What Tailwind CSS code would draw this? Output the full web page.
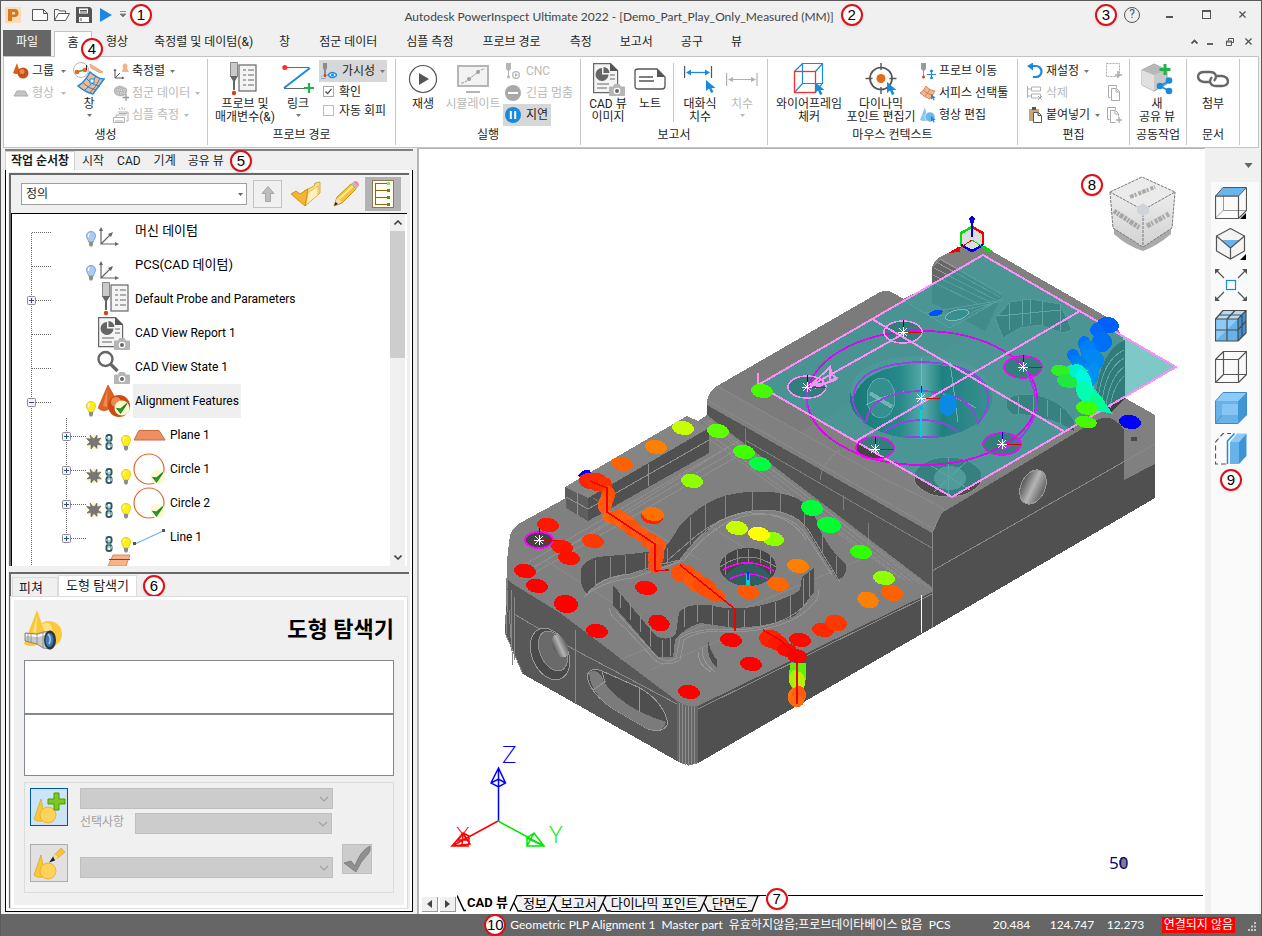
<!DOCTYPE html>
<html lang="ko">
<head>
    <meta charset="UTF-8">
    <meta name="viewport" content="width=device-width, initial-scale=1.0">
    <title>Autodesk PowerInspect Ultimate 2022</title>
    <script src="https://cdn.jsdelivr.net/npm/@tailwindcss/browser@4"></script>
</head>
<body class="h-screen flex flex-col overflow-hidden bg-[#f0f0f0] border-t border-x border-[#5a5a5a] font-['Roboto','Noto_Sans_CJK_KR',sans-serif] text-xs text-[#1e1e1e]">

    <!-- shared icons -->
    <svg class="hidden">
        <symbol id="arrow" viewBox="0 0 5 3"><path d="M0 0h5L2.500 3z" fill="currentColor"/></symbol>
        <symbol id="chevron" viewBox="0 0 10 6"><path d="M1 1l4 4 4-4" fill="none" stroke="currentColor" stroke-width="1.200"/></symbol>
        <symbol id="bulb" viewBox="0 0 10 16">
            <path d="M5 .5C2 .5.5 2.500.5 5c0 2.500 2 3.500 2 6h5c0-2.500 2-3.500 2-6C9.500 2.500 8 .5 5 .5z" fill="#ffee1a" stroke="#d8c800" stroke-width=".8"/>
            <path d="M3.500 2.500Q2 4 2.500 6" stroke="#fff" stroke-width="1.200" fill="none"/>
            <path d="M3 11h4v3l-1 1.500H4L3 14z" fill="#8d8d8d"/>
        </symbol>
        <symbol id="bulb-off" viewBox="0 0 10 16">
            <path d="M5 .5C2 .5.5 2.500.5 5c0 2.500 2 3.500 2 6h5c0-2.500 2-3.500 2-6C9.500 2.500 8 .5 5 .5z" fill="#a9cdf2" stroke="#6a94c8" stroke-width=".8"/>
            <path d="M3.500 2.500Q2 4 2.500 6" stroke="#fff" stroke-width="1.200" fill="none"/>
            <path d="M3 11h4v3l-1 1.500H4L3 14z" fill="#8d8d8d"/>
        </symbol>
        <symbol id="axes" viewBox="0 0 20 20">
            <path d="M2 3v14h15M2 17L12 7" fill="none" stroke="#666" stroke-width="1.200"/>
            <path d="M0 4l2-4 2 4zM16 15l4 2-4 2zM9 7l5-2-2 5z" fill="#666"/>
        </symbol>
        <symbol id="probe" viewBox="0 0 32 34">
            <rect x="10" y="3" width="17" height="26" fill="#f4f4f4" stroke="#666" stroke-width="1.200"/>
            <path d="M14 8h3m2 0h6M14 13h3m2 0h6M14 18h3m2 0h6M14 23h3m2 0h6" stroke="#666" stroke-width="1.200"/>
            <path d="M1.500 .5h7v14h-7z" fill="#c9c9c9" stroke="#888"/>
            <path d="M1 14h8l-3 5v9H4v-9z" fill="#666"/>
            <circle cx="5" cy="31" r="2.200" fill="#d2421c"/>
        </symbol>
        <symbol id="camera" viewBox="0 0 16 12">
            <path d="M1 2.500h3L5.500 0h5L12 2.500h3q1 0 1 1V11q0 1-1 1H1q-1 0-1-1V3.500q0-1 1-1z" fill="#b5b5b5"/>
            <circle cx="8" cy="7" r="3.300" fill="#fff"/><circle cx="8" cy="7" r="2" fill="#666"/>
        </symbol>
        <symbol id="report" viewBox="0 0 34 34">
            <path d="M2.600 1.600h17l7 7v22h-24z" fill="#f4f4f4" stroke="#666" stroke-width="1.200"/>
            <path d="M19 1v8h8z" fill="#555"/>
            <path d="M11 6v6.500h6.500A6.500 6.500 0 1 1 11 6z" fill="#666"/>
            <path d="M12.500 5a6 6 0 0 1 6 6h-6z" fill="#666"/>
            <path d="M19 13h5M19 17h5M6 22h12M6 26h10" stroke="#666" stroke-width="1.200"/>
            <use href="#camera" x="18" y="22" width="16" height="12"/>
        </symbol>
        <symbol id="lens" viewBox="0 0 34 34">
            <circle cx="9.500" cy="9" r="7" fill="#fff" stroke="#666" stroke-width="2.400"/>
            <path d="M14.500 14l7 7" stroke="#666" stroke-width="3.400"/>
            <use href="#camera" x="18" y="22" width="16" height="12"/>
        </symbol>
        <symbol id="ok" viewBox="0 0 16 16">
            <circle cx="8" cy="8" r="7.500" fill="#fdf8d0"/>
            <path d="M3 8.500l3.500 4.500L13 3.500 6.700 9z" fill="#2aa52a" stroke="#1c8a1c" stroke-width="1.200"/>
        </symbol>
        <symbol id="features" viewBox="0 0 34 34">
            <path d="M10 1L0 24q5 5 11 1l8-8z" fill="#dd6322" stroke="#b8471a" stroke-width=".6"/>
            <path d="M9.500 5L5 22l4 1z" fill="#ee8a4c"/>
            <circle cx="21" cy="22" r="11" fill="#cd4a12"/><circle cx="18" cy="18" r="5" fill="#ee8a4c"/>
            <use href="#ok" x="16" y="16" width="16" height="16"/>
        </symbol>
        <symbol id="plane" viewBox="0 0 34 34"><path d="M6 12.500h20l6 9.500H1z" fill="#ee8f63" stroke="#c86a3c"/></symbol>
        <symbol id="circle" viewBox="0 0 34 34">
            <circle cx="16" cy="17" r="15" fill="#fff" stroke="#e0692e" stroke-width="1.200"/>
            <use href="#ok" x="17" y="17" width="16" height="16"/>
        </symbol>
        <symbol id="line" viewBox="0 0 34 34">
            <path d="M2 24L30 11" stroke="#6fb3ea" stroke-width="1.300"/>
            <path d="M0 22h3v3H0zM29 9h3v3h-3z" fill="#555"/>
        </symbol>
        <symbol id="burst" viewBox="0 0 16 16">
            <circle cx="8" cy="8" r="7.500" fill="#fdf6cf"/>
            <path d="M7 4.500L4 1l1 4-4.500-.5L4 8l-3 3 4-.5L5 15l3-3.500 3 3 0-4 4.500.5L12 8l3-4-4 1 0-4-2.500 3.500z" fill="#777" stroke="#555" stroke-width=".5"/>
        </symbol>
        <symbol id="link" viewBox="0 0 8 16">
            <rect x="1.500" y="1" width="5" height="6" rx="2" fill="none" stroke="#2f5c60" stroke-width="2"/>
            <rect x="1.500" y="9" width="5" height="6" rx="2" fill="none" stroke="#2f5c60" stroke-width="2"/>
            <path d="M4 4v8M1.500 3v2M6.500 10v3" stroke="#7fb7ba" stroke-width="1.200"/>
        </symbol>
        <!-- tree guides -->
        <symbol id="g-first" viewBox="0 0 74 34"><path d="M19.500 19v15M20 18.500h19" stroke="#666" stroke-dasharray="1 1"/></symbol>
        <symbol id="g-mid" viewBox="0 0 74 34"><path d="M19.500 0v34M20 18.500h19" stroke="#666" stroke-dasharray="1 1"/></symbol>
        <symbol id="g-plus" viewBox="0 0 74 34">
            <use href="#g-mid"/><rect x="15.500" y="14.500" width="8" height="8" rx="1" fill="#f4f4f4" stroke="#8c8c8c"/>
            <path d="M17 18.500h5M19.500 16v5" stroke="#2b4a9a"/>
        </symbol>
        <symbol id="g-minus" viewBox="0 0 74 34">
            <use href="#g-mid"/><rect x="15.500" y="14.500" width="8" height="8" rx="1" fill="#f4f4f4" stroke="#8c8c8c"/>
            <path d="M17 18.500h5" stroke="#2b4a9a"/>
        </symbol>
        <symbol id="g-child" viewBox="0 0 74 34">
            <path d="M19.500 0v34M54.500 0v34M55 18.500h19" stroke="#666" stroke-dasharray="1 1"/>
            <rect x="50.500" y="14.500" width="8" height="8" rx="1" fill="#f4f4f4" stroke="#8c8c8c"/>
            <path d="M52 18.500h5M54.500 16v5" stroke="#2b4a9a"/>
        </symbol>
        <symbol id="g-last" viewBox="0 0 74 34">
            <path d="M19.500 0v34M54.500 0v16M55 18.500h19" stroke="#666" stroke-dasharray="1 1"/>
            <rect x="50.500" y="14.500" width="8" height="8" rx="1" fill="#f4f4f4" stroke="#8c8c8c"/>
            <path d="M52 18.500h5M54.500 16v5" stroke="#2b4a9a"/>
        </symbol>
        <symbol id="pointer" viewBox="0 0 10 14"><path d="M0 0v11l3-2.500L5 13l2.500-1L5.500 8H9.500z" fill="#1a8ae0"/></symbol>
        <symbol id="cone-ball" viewBox="0 0 24 26">
            <path d="M8 1L1 21q4 4 11 1z" fill="#f7c83c" stroke="#e0a010" stroke-width=".7"/>
            <circle cx="15" cy="17" r="8" fill="#ffd35a" stroke="#e8a21c" stroke-width=".7"/>
        </symbol>
    </svg>

    <!-- title bar -->
    <header class="flex h-[29px] shrink-0 items-center px-1 pb-[2px]">
        <div class="flex flex-1 items-center">
            <svg class="w-4 h-4" viewBox="0 0 16 16"><rect width="16" height="16" fill="#fbdcb8"/><path d="M3 2h6.500a4 4 0 0 1 0 8H7v4H3zM7 5v2.500h2a1.200 1.200 0 0 0 0-2.500z" fill="#d9781a"/></svg>
            <button class="ml-[11px] w-4 h-3" aria-label="새로 만들기"><svg viewBox="0 0 16 12"><path d="M.5.5h11l4 4v7H.5zM11.500.5v4h4" fill="#fff" stroke="#555"/></svg></button>
            <button class="ml-[6px] w-4 h-3" aria-label="열기"><svg viewBox="0 0 16 12"><path d="M.5 11.500V.5h4l1 1.500h6v2.500M.5 11.500l4-7h11l-4 7z" fill="#fff" stroke="#555"/></svg></button>
            <button class="ml-[6px] w-4 h-4" aria-label="저장"><svg viewBox="0 0 16 16"><path d="M0 0h14l2 2v14H0z" fill="#555"/><path d="M3 1.500h9v5H3zM3 10h10v5H3z" fill="#fff"/><path d="M4 3.500h7M4 5h7M5 11v3" stroke="#555"/></svg></button>
            <button class="ml-2 w-3 h-[14px]" aria-label="재생"><svg viewBox="0 0 12 14"><path d="M0 0v14l12-7z" fill="#1e87e5"/></svg></button>
            <button class="ml-2 w-[6px] h-[7px]" aria-label="사용자화"><svg viewBox="0 0 6 7"><path d="M0 .5h6M0 3h6L3 6z" fill="#777" stroke="#777" stroke-width=".8"/></svg></button>
            <span class="ml-1 flex w-[22px] h-[22px] items-center justify-center rounded-full border-2 border-[#dd1018] bg-white font-['Liberation_Sans',sans-serif] text-[15px] text-black shadow">1</span>
        </div>
        <div class="flex items-center gap-[7px] pl-4">
            <h1 class="pt-1 text-xs leading-4 text-[#444] font-['Lato',sans-serif]">Autodesk PowerInspect Ultimate 2022 - [Demo_Part_Play_Only_Measured (MM)]</h1>
            <span class="flex w-[22px] h-[22px] items-center justify-center rounded-full border-2 border-[#dd1018] bg-white font-['Liberation_Sans',sans-serif] text-[15px] text-black shadow">2</span>
        </div>
        <div class="flex flex-1 items-center justify-end pr-[11px] text-[#555]">
            <span class="mr-[7px] flex w-[22px] h-[22px] items-center justify-center rounded-full border-2 border-[#dd1018] bg-white font-['Liberation_Sans',sans-serif] text-[15px] text-black shadow">3</span>
            <button class="mr-[26px] w-4 h-4 rounded-full border border-[#555] text-xs leading-[13px]" aria-label="도움말">?</button>
            <button class="mr-[29px] w-[7px] h-[6px] border-b-2 border-[#555]" aria-label="최소화"></button>
            <button class="mr-7 w-[9px] h-[9px] border border-t-2 border-[#555]" aria-label="최대화"></button>
            <button class="w-[7px] h-[7px]" aria-label="닫기"><svg viewBox="0 0 8 8"><path d="M.5.5l7 7M7.500.5l-7 7" stroke="#555" stroke-width="1.500"/></svg></button>
        </div>
    </header>

    <!-- ribbon tabs -->
    <nav class="relative flex h-[26px] shrink-0 pl-[2px] leading-[22px]">
        <button class="w-12 bg-[#666] pb-[3px] text-white">파일</button>
        <button class="z-10 -mb-px ml-[3px] mt-px w-[38px] border border-b-0 border-[#c3c3c3] bg-white pb-[3px]">홈</button>
        <button class="px-[14px] pb-[3px]">형상</button>
        <button class="px-3 pb-[3px]">축정렬 및 데이텀(&amp;)</button>
        <button class="px-[14px] pb-[3px]">창</button>
        <button class="px-[15px] pb-[3px]">점군 데이터</button>
        <button class="px-[14px] pb-[3px]">심플 측정</button>
        <button class="px-[15px] pb-[3px]">프로브 경로</button>
        <button class="px-[14px] pb-[3px]">측정</button>
        <button class="px-[14px] pb-[3px]">보고서</button>
        <button class="px-[14px] pb-[3px]">공구</button>
        <button class="px-[14px] pb-[3px]">뷰</button>
        <div class="ml-auto flex items-center gap-[9px] pb-[3px] pr-[9px]">
            <button class="w-[7px] h-[5px]" aria-label="리본 접기"><svg viewBox="0 0 7 5"><path d="M.5 4.500l3-3 3 3" fill="none" stroke="#555" stroke-width="1.800"/></svg></button>
            <button class="w-[6px] h-[7px] border-b-2 border-[#666]" aria-label="문서 최소화"></button>
            <button class="ml-1 w-2 h-2" aria-label="문서 복원"><svg viewBox="0 0 8 8"><path d="M2.500 2.500V.5h5v4h-2M.5 3h5v4.500h-5zM.5 4h5" fill="none" stroke="#555"/></svg></button>
            <button class="ml-[2px] w-[7px] h-[7px]" aria-label="문서 닫기"><svg viewBox="0 0 8 8"><path d="M.5.5l7 7M7.500.5l-7 7" stroke="#555" stroke-width="1.500"/></svg></button>
        </div>
        <span class="absolute left-[80px] top-[8px] z-20 flex w-[22px] h-[22px] items-center justify-center rounded-full border-2 border-[#dd1018] bg-white font-['Liberation_Sans',sans-serif] text-[15px] text-black shadow">4</span>
    </nav>

    <!-- ribbon -->
    <div class="mx-[2px] flex h-[92px] shrink-0 border border-[#c3c3c3] bg-white py-[2px] whitespace-nowrap">
        <section class="flex w-[204px] flex-col border-r border-[#c8c8c8]">
            <div class="flex h-[67px] pl-[9px]">
                <div class="w-[60px] pt-px">
                    <button class="flex h-[22px] items-center gap-[3px]">
                        <svg class="w-4 h-4" viewBox="0 0 16 16"><path d="M4 0L0 10q3 2 7 0z" fill="#d95f1e"/><circle cx="10" cy="10" r="5.500" fill="#c8501a"/><circle cx="9" cy="8.500" r="2.500" fill="#e98b52"/></svg>
                        <span>그룹</span><svg class="ml-1 w-[5px] h-[3px] text-[#777]"><use href="#arrow"/></svg>
                    </button>
                    <button class="flex h-[22px] items-center gap-[3px] text-[#b9b9b9]">
                        <svg class="w-4 h-4" viewBox="0 0 16 16"><path d="M4 6h8l3 5H1z" fill="#c4c4c4" stroke="#aaa"/></svg>
                        <span>형상</span><svg class="ml-1 w-[5px] h-[3px]"><use href="#arrow"/></svg>
                    </button>
                </div>
                <button class="flex w-8 flex-col items-center pt-[3px] leading-[13px]">
                    <svg class="w-8 h-[34px] shrink-0" viewBox="0 0 32 34"><circle cx="8" cy="8" r="7.500" fill="#fff" stroke="#b5b5b5"/><path d="M4 10l7-2" stroke="#2aa54a" stroke-width="1.600"/><circle cx="4" cy="10" r="2.300" fill="#f2621c"/><circle cx="12" cy="8" r="2.300" fill="#f2621c"/><path d="M13.500 8V3" stroke="#333"/><path d="M17 2l13 8-3 1-9-5z" fill="#f4b48c" stroke="#c98a62" stroke-width=".6"/><path d="M17 10Q25 17 31 17L20 32Q12 30 5 24Q12 20 17 10z" fill="#f4b98c" stroke="#1a8ae0" stroke-width="1.500"/><path d="M13 16q7 8 14 8M9 20q7 7 14 8M23 14q-4 9-11 14M27 16.500q-4 9-10 14" fill="none" stroke="#1a8ae0"/><rect x="17" y="17" width="4" height="4" fill="#fff" stroke="#1a8ae0"/></svg>
                    <span class="mt-[2px]">창</span><svg class="mt-[3px] w-[5px] h-[3px] text-[#777]"><use href="#arrow"/></svg>
                </button>
                <div class="pl-2 pt-px">
                    <button class="flex h-[22px] items-center gap-[3px]">
                        <svg class="w-4 h-4" viewBox="0 0 16 16"><path d="M2 7v8h8M2 15l5-5" fill="none" stroke="#555"/><path d="M.5 8L2 5.500 3.500 8zM9 13.500l2.500 1.500L9 16.500z" fill="#555"/><circle cx="12" cy="3" r="2.500" fill="#f4b48c"/><path d="M10 5h4l2 4H9z" fill="#f4b48c"/></svg>
                        <span>축정렬</span><svg class="ml-[2px] w-[5px] h-[3px] text-[#777]"><use href="#arrow"/></svg>
                    </button>
                    <button class="flex h-[22px] items-center gap-[3px] text-[#b9b9b9]">
                        <svg class="w-4 h-4" viewBox="0 0 16 16"><path d="M3 2q4-3 8 0 4 1 3 5-1 4-5 4-5 1-7-2-3-4 1-7z" fill="#b5b5b5"/><path d="M2 5h11M3 8h10M5 2v9M8 1v10M11 2v8" stroke="#ddd" stroke-dasharray="1 1"/><path d="M13 9v7M9.500 12.500h6.500" stroke="#999" stroke-width="1.300"/></svg>
                        <span>점군 데이터</span><svg class="ml-[2px] w-[5px] h-[3px]"><use href="#arrow"/></svg>
                    </button>
                    <button class="flex h-[22px] items-center gap-[3px] text-[#b9b9b9]">
                        <svg class="w-4 h-4" viewBox="0 0 16 16"><path d="M6 1l1 2M9 0v2.500M12 1l-1 2M5 5h10v9h-2M3 8h10M3 8v3M.5 10.500h11v5H.5zM3 13v2M5 13v2M7 13v2M9 13v2M6 6.500h8" fill="none" stroke="#b0b0b0"/></svg>
                        <span>심플 측정</span><svg class="ml-[2px] w-[5px] h-[3px]"><use href="#arrow"/></svg>
                    </button>
                </div>
            </div>
            <h2 class="text-center leading-[18px]">생성</h2>
        </section>

        <section class="flex w-[188px] flex-col border-r border-[#c8c8c8]">
            <div class="flex h-[67px] pl-[5px]">
                <button class="flex w-16 flex-col items-center pt-[3px] leading-[13px]">
                    <svg class="w-8 h-[34px] shrink-0"><use href="#probe"/></svg>
                    <span class="mt-[2px]">프로브 및<br>매개변수(&amp;)</span>
                </button>
                <button class="flex w-[42px] flex-col items-center pt-[3px] leading-[13px]">
                    <svg class="w-8 h-[34px] shrink-0" viewBox="0 0 32 34"><path d="M4 5.500h23M2 26.500h20" stroke="#666" stroke-width="1.200"/><path d="M2 26L28 6" stroke="#1a8ae0" stroke-width="2"/><circle cx="2.800" cy="5.500" r="2.500" fill="#ff2a2a"/><path d="M27 21v10M22 26h10" stroke="#22b14c" stroke-width="2.200"/></svg>
                    <span class="mt-[2px]">링크</span><svg class="mt-[3px] w-[5px] h-[3px] text-[#777]"><use href="#arrow"/></svg>
                </button>
                <div class="pt-px">
                    <button class="flex w-[68px] h-[22px] items-center gap-[5px] bg-[#d5d7d9] pl-[2px]">
                        <svg class="w-4 h-4" viewBox="0 0 16 16"><path d="M2 0h4v5L5 7v5H3V7L2 5z" fill="#8a8a8a"/><circle cx="4" cy="12.500" r="1.500" fill="#d2421c"/><path d="M0 13v2.500h5" fill="none" stroke="#1a8ae0" stroke-dasharray="1 1"/><path d="M7 12q4-5 9 0-5 5-9 0z" fill="#fff" stroke="#1a8ae0" stroke-width="1.400"/><circle cx="11.500" cy="12" r="1.500" fill="#1a8ae0"/></svg>
                        <span>가시성</span><svg class="w-[5px] h-[3px] text-[#777]"><use href="#arrow"/></svg>
                    </button>
                    <label class="flex h-[19px] items-center gap-[5px] pl-1">
                        <span class="grid place-items-center"><input type="checkbox" checked class="col-start-1 row-start-1 w-[11px] h-[11px] appearance-none border border-[#aaa] bg-white"><svg class="pointer-events-none col-start-1 row-start-1 w-[7px] h-[7px]" viewBox="0 0 8 8"><path d="M.5 4l2.500 2.500L7.500 1" fill="none" stroke="#444" stroke-width="1.400"/></svg></span>
                        확인
                    </label>
                    <label class="flex h-[19px] items-center gap-[5px] pl-1">
                        <input type="checkbox" class="w-[11px] h-[11px] appearance-none border border-[#bbb] bg-white">
                        자동 회피
                    </label>
                </div>
            </div>
            <h2 class="text-center leading-[18px]">프로브 경로</h2>
        </section>

        <section class="flex w-[185px] flex-col border-r border-[#c8c8c8]">
            <div class="flex h-[67px] pl-[5px]">
                <button class="flex w-11 flex-col items-center pt-[3px] leading-[13px]">
                    <svg class="w-8 h-[34px] shrink-0" viewBox="0 0 32 34"><circle cx="16" cy="17" r="13.500" fill="#fff" stroke="#555" stroke-width="1.200"/><path d="M12 11v12l10-6z" fill="#555"/></svg>
                    <span class="mt-[2px]">재생</span>
                </button>
                <button class="flex w-14 flex-col items-center pt-[3px] leading-[13px] text-[#b9b9b9]">
                    <svg class="w-8 h-[34px] shrink-0" viewBox="0 0 32 34"><rect x="1" y="4" width="30" height="20" fill="#f2f2f2" stroke="#b5b5b5" stroke-width="2"/><path d="M4 21q4 0 8-4l9-7q3-3 7-3" fill="none" stroke="#999" stroke-dasharray="3 1"/><circle cx="12" cy="17" r="2" fill="#a0a0a0"/><circle cx="21" cy="10" r="2" fill="#a0a0a0"/><path d="M9 30h14" stroke="#b5b5b5" stroke-width="2"/></svg>
                    <span class="mt-[2px]">시뮬레이트</span>
                </button>
                <div class="pl-[2px] pt-px">
                    <button class="flex h-[22px] items-center gap-[5px] pl-[2px] text-[#b9b9b9]">
                        <svg class="w-4 h-4" viewBox="0 0 16 16"><path d="M1 0h5v6l-2 2v5H3V8L1 6z" fill="#b5b5b5"/><circle cx="3.500" cy="14" r="1.500" fill="#b5b5b5"/><circle cx="11" cy="12" r="3.300" fill="#fff" stroke="#b5b5b5" stroke-width="1.300"/><path d="M10 10v4l3-2z" fill="#b5b5b5"/></svg>
                        <span>CNC</span>
                    </button>
                    <button class="flex h-[22px] items-center gap-[5px] pl-[2px] text-[#b9b9b9]">
                        <svg class="w-4 h-4" viewBox="0 0 16 16"><circle cx="8" cy="8" r="8" fill="#a8a8a8"/><path d="M3 8h10" stroke="#fff" stroke-width="2"/></svg>
                        <span>긴급 멈춤</span>
                    </button>
                    <button class="flex w-12 h-[22px] items-center gap-[5px] bg-[#d5d7d9] pl-[2px]">
                        <svg class="w-4 h-4" viewBox="0 0 16 16"><circle cx="8" cy="8" r="8" fill="#1a8ae0"/><path d="M5.800 4v8M10.200 4v8" stroke="#fff" stroke-width="2"/></svg>
                        <span>지연</span>
                    </button>
                </div>
            </div>
            <h2 class="text-center leading-[18px]">실행</h2>
        </section>

        <section class="flex w-[187px] flex-col border-r border-[#c8c8c8]">
            <div class="flex h-[67px] pl-1">
                <button class="flex w-[46px] flex-col items-center pt-[3px] leading-[13px]">
                    <svg class="w-[34px] h-[34px] shrink-0"><use href="#report"/></svg>
                    <span class="mt-[2px]">CAD 뷰<br>이미지</span>
                </button>
                <button class="flex w-[38px] flex-col items-center pt-[3px] leading-[13px]">
                    <svg class="w-8 h-[34px] shrink-0" viewBox="0 0 32 34"><path d="M3 7h20l8 8v9q0 3-3 3H4q-3 0-3-3V9q0-2 3-2z" fill="#fff" stroke="#555" stroke-width="1.300"/><path d="M23 7v8h8z" fill="#555"/><path d="M5 15h14M5 19h15" stroke="#555" stroke-width="1.300"/></svg>
                    <span class="mt-[2px]">노트</span>
                </button>
                <div class="my-1 ml-1 w-px bg-[#c8c8c8]"></div>
                <button class="ml-1 flex w-11 flex-col items-center pt-[3px] leading-[13px]">
                    <svg class="w-8 h-[34px] shrink-0" viewBox="0 0 32 34"><path d="M.6 4v12M27.500 4v12" stroke="#555" stroke-width="1.200"/><path d="M4 10.500h20" stroke="#1a8ae0" stroke-width="1.300"/><path d="M2 10.500l5-3v6zM26 10.500l-5-3v6z" fill="#1a8ae0"/><use href="#pointer" x="22" y="18" width="10" height="14"/></svg>
                    <span class="mt-[2px]">대화식<br>치수</span>
                </button>
                <button class="flex w-10 flex-col items-center pt-[3px] leading-[13px] text-[#b9b9b9]">
                    <svg class="w-8 h-[34px] shrink-0" viewBox="0 0 32 34"><path d="M.6 11v13M31 11v13M4 17.500h24" stroke="#b0b0b0" stroke-width="1.200"/><path d="M2 17.500l5-2.500v5zM30 17.500L25 15v5z" fill="#b0b0b0"/></svg>
                    <span class="mt-[2px]">치수</span><svg class="mt-[3px] w-[5px] h-[3px]"><use href="#arrow"/></svg>
                </button>
            </div>
            <h2 class="text-center leading-[18px]">보고서</h2>
        </section>

        <section class="flex w-[250px] flex-col border-r border-[#c8c8c8]">
            <div class="flex h-[67px] pl-[6px]">
                <button class="flex w-[70px] flex-col items-center pt-[3px] leading-[13px]">
                    <svg class="w-8 h-[34px] shrink-0" viewBox="0 0 32 34"><path d="M9.500 1.500h20v20h-20zM1.500 9.500l8-8M22.500 9.500l7-8M1.500 30.500l8-9M22 30l7-8" fill="none" stroke="#1a8ae0" stroke-width="1.200"/><rect x="1.500" y="9.500" width="21" height="21" fill="none" stroke="#ff2a2a" stroke-width="1.300"/><use href="#pointer" x="22" y="20" width="10" height="14"/></svg>
                    <span class="mt-[2px]">와이어프레임<br>체커</span>
                </button>
                <button class="flex w-[74px] flex-col items-center pt-[3px] leading-[13px]">
                    <svg class="w-8 h-[34px] shrink-0" viewBox="0 0 32 34"><circle cx="16" cy="16.500" r="11" fill="#fff" stroke="#555" stroke-width="1.700"/><path d="M16 1v7M16 25v7M.5 16.500h7M24.500 16.500h7" stroke="#555" stroke-width="1.400"/><circle cx="16" cy="16.500" r="4.500" fill="#e36b1e"/><use href="#pointer" x="22" y="20" width="10" height="14"/></svg>
                    <span class="mt-[2px]">다이나믹<br>포인트 편집기</span>
                </button>
                <div class="pl-[2px] pt-px">
                    <button class="flex h-[22px] items-center gap-[3px]">
                        <svg class="w-4 h-4" viewBox="0 0 16 16"><path d="M1 0h5v6L4 8v5H3V8L1 6z" fill="#9a9a9a"/><circle cx="3.500" cy="14" r="1.500" fill="#d2421c"/><path d="M11.500 7v9M7 11.500h9M10 8.500l1.500-1.500L13 8.500M10 14.500l1.500 1.500 1.500-1.500" fill="none" stroke="#1a8ae0" stroke-width="1.200"/></svg>
                        <span>프로브 이동</span>
                    </button>
                    <button class="flex h-[22px] items-center gap-[3px]">
                        <svg class="w-4 h-4" viewBox="0 0 16 16"><path d="M6 1q4 5 9 5l-5 8Q4 12 0 8q4-2 6-7z" fill="#f4b48c" stroke="#c07a50" stroke-width=".8"/><path d="M3 5q5 5 10 5M10 4Q8 8 5 11" fill="none" stroke="#c07a50" stroke-width=".8"/><use href="#pointer" x="11" y="9" width="5" height="7"/></svg>
                        <span>서피스 선택툴</span>
                    </button>
                    <button class="flex h-[22px] items-center gap-[3px]">
                        <svg class="w-4 h-4" viewBox="0 0 16 16"><path d="M5 0L0 13q3 2 8 0z" fill="#8cc6f2"/><circle cx="10" cy="10" r="5" fill="#6fb5ea" stroke="#fff" stroke-width=".6"/><use href="#pointer" x="11" y="9" width="5" height="7"/></svg>
                        <span>형상 편집</span>
                    </button>
                </div>
            </div>
            <h2 class="text-center leading-[18px]">마우스 컨텍스트</h2>
        </section>

        <section class="flex w-[112px] flex-col border-r border-[#c8c8c8]">
            <div class="flex h-[67px] pl-[9px] pt-px">
                <div class="w-[79px]">
                    <button class="flex h-[22px] items-center gap-[3px]">
                        <svg class="w-4 h-4" viewBox="0 0 16 16"><path d="M5 3h4a5 5 0 0 1 0 11H6" fill="none" stroke="#1a8ae0" stroke-width="2.200"/><path d="M0 3l6-3.500v8z" fill="#1a8ae0"/></svg>
                        <span>재설정</span><svg class="ml-[2px] w-[5px] h-[3px] text-[#777]"><use href="#arrow"/></svg>
                    </button>
                    <button class="flex h-[22px] items-center gap-[3px] text-[#b9b9b9]">
                        <svg class="w-4 h-4" viewBox="0 0 16 16"><path d="M.5 1v12M1 4h3M1 11h3M4.500 2h9v4h-9zM4.500 9h9v4h-9zM11 11l4 4M15 11l-4 4" fill="none" stroke="#b0b0b0"/></svg>
                        <span>삭제</span>
                    </button>
                    <button class="flex h-[22px] items-center gap-[3px]">
                        <svg class="w-4 h-4" viewBox="0 0 16 16"><path d="M2 2h10v12H2z" fill="#c7a57c"/><path d="M5 0h4v3H5z" fill="#555"/><path d="M6.500 5.500h5l3 3v7h-8zM11 5.500v3h3" fill="#fff" stroke="#555"/></svg>
                        <span>붙여넣기</span><svg class="ml-[2px] w-[5px] h-[3px] text-[#777]"><use href="#arrow"/></svg>
                    </button>
                </div>
                <div>
                    <button class="flex h-[22px] items-center" aria-label="잘라내기"><svg class="w-4 h-4" viewBox="0 0 16 16"><path d="M.5.5h13v13H.5z" fill="none" stroke="#aaa" stroke-dasharray="2 1"/><path d="M12 8v7M9 12h7" stroke="#aaa" stroke-width="1.500"/></svg></button>
                    <button class="flex h-[22px] items-center" aria-label="복사"><svg class="w-4 h-4" viewBox="0 0 16 16"><path d="M10.500 2.500v-2h-8v12h2M5.500 3.500h5l3 3v9h-8zM10 3.500v3.500h3.500" fill="none" stroke="#aaa"/></svg></button>
                    <button class="flex h-[22px] items-center" aria-label="복제"><svg class="w-4 h-4" viewBox="0 0 16 16"><path d="M9.500 2.500v-2h-8v12h2M4.500 3.500h5l3 3v3M4.500 3.500v12h5M9 3.500v3.500h3.500" fill="none" stroke="#aaa"/><path d="M13 10v6M10 13h6" stroke="#aaa" stroke-width="1.300"/></svg></button>
                </div>
            </div>
            <h2 class="text-center leading-[18px]">편집</h2>
        </section>

        <section class="flex w-[57px] flex-col border-r border-[#c8c8c8]">
            <button class="flex h-[67px] flex-col items-center pr-[2px] pt-[3px] leading-[13px]">
                <svg class="w-8 h-[34px] shrink-0" viewBox="0 0 32 34"><path d="M1 8l12-6 13 6v14l-13 7-12-6z" fill="#c9c9c9" stroke="#888" stroke-width=".8"/><path d="M1 8l12 5v16L1 23z" fill="#e0e0e0"/><path d="M1 8l12-6 13 6-13 5z" fill="#b8b8b8"/><path d="M24 2v11M18.500 7.500h11" stroke="#22b14c" stroke-width="3"/><path d="M28 19l-9 5 9 5" fill="none" stroke="#1a8ae0" stroke-width="1.500"/><circle cx="28" cy="18.500" r="3.300" fill="#1a8ae0"/><circle cx="19" cy="24" r="3.300" fill="#1a8ae0"/><circle cx="28" cy="29" r="3.300" fill="#1a8ae0"/></svg>
                <span class="mt-[2px]">새<br>공유 뷰</span>
            </button>
            <h2 class="text-center leading-[18px]">공동작업</h2>
        </section>

        <section class="flex w-[53px] flex-col border-r border-[#c8c8c8]">
            <button class="flex h-[67px] flex-col items-center pt-[3px] leading-[13px]">
                <svg class="w-8 h-[34px] shrink-0" viewBox="0 0 32 34"><path d="M12 20H7q-6-1-6-6 1-4 6-4h6q5 0 6 4 0 3-2 5" fill="none" stroke="#666" stroke-width="2.400"/><path d="M20 14h5q6 1 6 6-1 4-6 4h-6q-5 0-6-4 0-3 2-5" fill="none" stroke="#666" stroke-width="2.400"/></svg>
                <span class="mt-[2px]">첨부</span>
            </button>
            <h2 class="text-center leading-[18px]">문서</h2>
        </section>
    </div>

    <main class="flex min-h-0 flex-1">
        <!-- left side panels -->
        <aside class="flex w-[416px] shrink-0 flex-col pb-[2px] pl-1 pr-1">
            <div class="h-[3px] shrink-0 border-b-2 border-[#808080]"></div>
            <div class="flex h-[19px] shrink-0 items-center leading-[16px]">
                <button class="h-[19px] w-[70px] border border-b-0 border-[#d0d0d0] bg-white text-center font-bold">작업 순서창</button>
                <button class="pl-[7px] pr-[6px]">시작</button>
                <button class="px-[7px]">CAD</button>
                <button class="px-[6px]">기계</button>
                <button class="px-[6px]">공유 뷰</button>
                <span class="z-10 flex w-[22px] h-[22px] shrink-0 items-center justify-center rounded-full border-2 border-[#dd1018] bg-white font-['Liberation_Sans',sans-serif] text-[15px] text-black shadow">5</span>
            </div>
            <div class="flex min-h-0 flex-1 flex-col gap-[6px] border border-t-0 border-black bg-[#f0f0f0] p-[3px] ring-inset ring-2 ring-white">
                <section class="flex min-h-0 flex-1 flex-col border-l-2 border-t-2 border-[#696969] pr-[2px]">
                    <div class="flex h-[38px] shrink-0 items-center pl-[10px] pr-[6px]">
                        <div class="grid flex-1 items-center">
                            <select aria-label="보기" class="col-start-1 row-start-1 h-[22px] appearance-none border border-[#a0a0a0] bg-white pl-1 text-xs leading-4"><option>정의</option></select>
                            <svg class="pointer-events-none col-start-1 row-start-1 mr-1 w-[5px] h-[3px] justify-self-end text-[#666]"><use href="#arrow"/></svg>
                        </div>
                        <button class="ml-[6px] flex w-[29px] h-[28px] items-center justify-center border border-[#c3c3c3]" aria-label="위로"><svg class="w-[14px] h-4" viewBox="0 0 14 16"><path d="M7 .5l6 7H9.500v8h-5v-8H1z" fill="#bdbdbd" stroke="#a5a5a5"/></svg></button>
                        <button class="ml-[8px] w-[32px] h-7" aria-label="폴더"><svg viewBox="0 0 32 28"><path d="M14 11L24 6l1-3 5-1v11L15 26z" fill="#f9dc84" stroke="#c99a28" stroke-width=".8"/><path d="M18 13L28 6v9L16 25z" fill="#fdf0bc" stroke="#d6aa3c" stroke-width=".6"/><path d="M1 14l5-3 4 3 8-5-3 17z" fill="#f7b42c" stroke="#c88208" stroke-width=".8"/></svg></button>
                        <button class="ml-[10px] w-7 h-7" aria-label="편집"><svg viewBox="0 0 28 28"><path d="M2 26l3-9L19 4l5 5-14 14z" fill="#f9c22e" stroke="#b98310" stroke-width=".8"/><path d="M7 19L21 6" stroke="#fde795" stroke-width="2"/><path d="M19 4l2-2 5 5-2 2z" fill="#bbb"/><path d="M21 2q4-3 6 2 0 2-1 3z" fill="#f08ca4"/><path d="M2 26l3-8 5 4z" fill="#f5dcb4"/><path d="M2 26l1.500-4 2.500 2z" fill="#222"/></svg></button>
                        <button class="ml-[5px] flex w-9 h-[34px] items-center justify-center bg-[#b3b3b5]" aria-label="트리 보기"><svg class="w-[22px] h-7" viewBox="0 0 22 28"><rect x=".5" y=".5" width="21" height="27" fill="#fffdf2" stroke="#8c7a50"/><path d="M3.500 3v22M3 3.500h12M3 10.500h12M3 17.500h12M3 24.500h12" stroke="#8a6414" fill="none"/><path d="M15 9h3v3h-3zM15 16h3v3h-3zM15 23h3v3h-3z" fill="#4a9a1c"/><path d="M15 2h3v3h-3z" fill="#8fe05a"/></svg></button>
                    </div>
                    <div class="flex min-h-0 flex-1 border-l border-t border-black bg-white">
                        <ul role="tree" class="min-w-0 flex-1 overflow-hidden text-[13px] leading-[34px] text-black">
                            <li class="flex h-[34px]"><svg class="w-[74px] h-[34px]"><use href="#g-first"/></svg><svg class="mt-[17px] w-[10px] h-4"><use href="#bulb-off"/></svg><svg class="ml-[3px] mr-[16px] mt-[13px] w-5 h-5"><use href="#axes"/></svg><span>머신 데이텀</span></li>
                            <li class="flex h-[34px]"><svg class="w-[74px] h-[34px]"><use href="#g-mid"/></svg><svg class="mt-[17px] w-[10px] h-4"><use href="#bulb-off"/></svg><svg class="ml-[3px] mr-[16px] mt-[13px] w-5 h-5"><use href="#axes"/></svg><span>PCS(CAD 데이텀)</span></li>
                            <li class="flex h-[34px]"><svg class="mr-[14px] w-[74px] h-[34px]"><use href="#g-plus"/></svg><svg class="mr-px w-[34px] h-[34px]"><use href="#probe"/></svg><span class="text-xs leading-[34px]">Default Probe and Parameters</span></li>
                            <li class="flex h-[34px]"><svg class="mr-[10px] w-[74px] h-[34px]"><use href="#g-mid"/></svg><svg class="mr-[5px] w-[34px] h-[34px]"><use href="#report"/></svg><span class="text-xs leading-[34px]">CAD View Report 1</span></li>
                            <li class="flex h-[34px]"><svg class="mr-[10px] w-[74px] h-[34px]"><use href="#g-mid"/></svg><svg class="mr-[5px] w-[34px] h-[34px]"><use href="#lens"/></svg><span class="text-xs leading-[34px]">CAD View State 1</span></li>
                            <li class="flex h-[34px]"><svg class="w-[74px] h-[34px]"><use href="#g-minus"/></svg><svg class="mt-[17px] w-[10px] h-4"><use href="#bulb"/></svg><svg class="ml-[2px] w-[34px] h-[34px]"><use href="#features"/></svg><span class="ml-px bg-[#efefef] px-[2px] text-xs leading-[34px]">Alignment Features</span></li>
                            <li class="flex h-[34px]"><svg class="w-[74px] h-[34px]"><use href="#g-child"/></svg><svg class="mt-4 w-4 h-4"><use href="#burst"/></svg><svg class="ml-[3px] mt-4 w-2 h-4"><use href="#link"/></svg><svg class="ml-2 mt-[17px] w-[10px] h-4"><use href="#bulb"/></svg><svg class="ml-[2px] mr-[3px] w-[34px] h-[34px]"><use href="#plane"/></svg><span class="text-xs leading-[34px]">Plane 1</span></li>
                            <li class="flex h-[34px]"><svg class="w-[74px] h-[34px]"><use href="#g-child"/></svg><svg class="mt-4 w-4 h-4"><use href="#burst"/></svg><svg class="ml-[3px] mt-4 w-2 h-4"><use href="#link"/></svg><svg class="ml-2 mt-[17px] w-[10px] h-4"><use href="#bulb"/></svg><svg class="ml-[2px] mr-[3px] w-[34px] h-[34px]"><use href="#circle"/></svg><span class="text-xs leading-[34px]">Circle 1</span></li>
                            <li class="flex h-[34px]"><svg class="w-[74px] h-[34px]"><use href="#g-child"/></svg><svg class="mt-4 w-4 h-4"><use href="#burst"/></svg><svg class="ml-[3px] mt-4 w-2 h-4"><use href="#link"/></svg><svg class="ml-2 mt-[17px] w-[10px] h-4"><use href="#bulb"/></svg><svg class="ml-[2px] mr-[3px] w-[34px] h-[34px]"><use href="#circle"/></svg><span class="text-xs leading-[34px]">Circle 2</span></li>
                            <li class="flex h-[34px]"><svg class="mr-4 w-[74px] h-[34px]"><use href="#g-last"/></svg><svg class="ml-[3px] mt-4 w-2 h-4"><use href="#link"/></svg><svg class="ml-2 mt-[17px] w-[10px] h-4"><use href="#bulb"/></svg><svg class="ml-[2px] mr-[3px] w-[34px] h-[34px]"><use href="#line"/></svg><span class="text-xs leading-[34px]">Line 1</span></li>
                            <li class="h-3"><svg class="w-[130px] h-3" viewBox="0 0 130 12"><path d="M19.500 0v12" stroke="#666" stroke-dasharray="1 1"/><path d="M101 1h17l-4 11H96z" fill="#f6b48c" stroke="#d98a5c"/><path d="M97 5.500h21" stroke="#555"/></svg></li>
                        </ul>
                        <div class="mr-[2px] flex w-[15px] shrink-0 flex-col items-center bg-[#f0f0f0] text-[#444]">
                            <button class="flex h-[17px] items-center" aria-label="위로 스크롤"><svg class="w-2 h-[5px]" viewBox="0 0 8 5"><path d="M.5 4.500L4 1l3.500 3.500" fill="none" stroke="#444" stroke-width="1.600"/></svg></button>
                            <div class="h-[127px] w-full bg-[#cdcdcd]"></div>
                            <button class="mt-auto flex h-[17px] items-center" aria-label="아래로 스크롤"><svg class="w-2 h-[5px]" viewBox="0 0 8 5"><path d="M.5.5L4 4 7.500.5" fill="none" stroke="#444" stroke-width="1.600"/></svg></button>
                        </div>
                    </div>
                </section>

                <section class="flex h-[336px] shrink-0 flex-col border-l-2 border-t-2 border-[#696969] pr-[2px]">
                    <div class="flex h-[23px] shrink-0 items-end text-[13px] leading-5">
                        <button class="ml-[1px] h-5 w-[46px] border border-b-0 border-[#dcdcdc] pr-2 leading-[18px]">피쳐</button>
                        <button class="h-[22px] w-[79px] border border-b-0 border-[#dcdcdc] bg-white pb-[2px] leading-[18px]">도형 탐색기</button>
                        <span class="ml-[6px] flex w-[22px] h-[22px] items-center justify-center rounded-full border-2 border-[#dd1018] bg-white font-['Liberation_Sans',sans-serif] text-[15px] text-black shadow">6</span>
                    </div>
                    <div class="flex min-h-0 flex-1 flex-col border-[3px] border-white bg-[#f0f0f0] px-[10px] pb-[12px] outline outline-[#dcdcdc]">
                        <div class="flex h-[60px] shrink-0 items-center justify-between">
                            <svg class="w-[38px] h-[42px]" viewBox="0 0 38 42"><circle cx="25" cy="25" r="13" fill="#fbc93c"/><circle cx="22" cy="20" r="6" fill="#fde28c"/><path d="M13 1L0 35q6 4 16 0l4-14z" fill="#f9c832"/><path d="M13 6l-4 17 3 1z" fill="#fde795"/><path d="M1 24l12 1 6-2 8-1v18l-8-1-6-4-12-3z" fill="#c6c8ca" stroke="#777" stroke-width=".8"/><path d="M2 26l12 1 8-2" stroke="#fff" stroke-width="2" fill="none"/><path d="M4 24v9M7 25v9M13 25v10M19 23v16" stroke="#888" stroke-width=".8"/><ellipse cx="26" cy="31" rx="6" ry="9.500" fill="#333"/><ellipse cx="25.500" cy="31" rx="4" ry="7" fill="#3f78b8"/><path d="M24 25q4 4 1 10" stroke="#a9d3f5" stroke-width="1.500" fill="none"/></svg>
                            <h2 class="pb-px text-[22px] font-bold leading-7 text-black">도형 탐색기</h2>
                        </div>
                        <select multiple aria-label="형상 목록" class="h-[54px] shrink-0 appearance-none border border-[#828790] bg-white"></select>
                        <select multiple aria-label="결과 목록" class="h-[62px] shrink-0 appearance-none border border-[#828790] bg-white"></select>
                        <div class="mt-[6px] flex min-h-0 flex-1 gap-3 border border-[#dcdcdc] pl-[5px] pt-[5px]">
                            <div class="flex flex-col gap-[18px]">
                                <button class="flex w-[38px] h-[38px] items-center justify-center border border-[#0054a0] bg-[#cce4f7]" aria-label="형상 추가"><svg class="w-[34px] h-[34px]" viewBox="0 0 34 34"><use href="#cone-ball" x="1" y="8" width="24" height="26"/><path d="M22 3h5v6h6v5h-6v6h-5v-6h-6V9h6z" fill="#7cc91e" stroke="#4a9a0c"/></svg></button>
                                <button class="flex w-[38px] h-[38px] items-center justify-center border border-[#adadad] bg-[#e1e1e1]" aria-label="형상 편집"><svg class="w-[34px] h-[34px]" viewBox="0 0 34 34"><use href="#cone-ball" x="1" y="8" width="24" height="26"/><path d="M20 14l3-6 6-6 4 4-7 6z" fill="#f9c22e" stroke="#d6b070"/><path d="M20 14l3-6 3 4z" fill="#f2dcb8"/><path d="M19 15l2-3 1 2z" stroke="#222" stroke-width="1.500"/></svg></button>
                            </div>
                            <div class="w-[253px] text-[#a0a0a0]">
                                <div class="grid items-center"><select disabled aria-label="형상 유형" class="col-start-1 row-start-1 h-[21px] appearance-none border border-[#bfbfbf] bg-[#ccc]"></select><svg class="pointer-events-none col-start-1 row-start-1 mr-1 w-[10px] h-[6px] justify-self-end"><use href="#chevron"/></svg></div>
                                <div class="mt-1 flex items-center justify-between pr-px"><label for="opt" class="pb-[2px] leading-[17px]">선택사항</label><div class="grid w-[197px] items-center"><select id="opt" disabled class="col-start-1 row-start-1 h-[21px] appearance-none border border-[#bfbfbf] bg-[#ccc]"></select><svg class="pointer-events-none col-start-1 row-start-1 mr-1 w-[10px] h-[6px] justify-self-end"><use href="#chevron"/></svg></div></div>
                                <div class="mt-[23px] grid items-center"><select disabled aria-label="편집 형상" class="col-start-1 row-start-1 h-[21px] appearance-none border border-[#bfbfbf] bg-[#ccc]"></select><svg class="pointer-events-none col-start-1 row-start-1 mr-1 w-[10px] h-[6px] justify-self-end"><use href="#chevron"/></svg></div>
                            </div>
                            <button disabled class="-ml-[3px] mt-14 w-[30px] h-[30px] border border-[#bfbfbf] bg-[#ccc]" aria-label="적용"><svg viewBox="0 0 28 28"><path d="M1 18l7-2 4 5Q17 6 27 1q1 5-2 8-8 8-12 18z" fill="#8f8f8f" stroke="#777" stroke-width=".8"/></svg></button>
                        </div>
                    </div>
                </section>
            </div>
        </aside>

        <!-- CAD view -->
        <section class="flex min-w-0 flex-1 flex-col border-l-2 border-t border-[#b5b5b5] bg-white">
            <div class="relative min-h-0 flex-1">
                <svg class="absolute inset-0 w-full h-full" viewBox="419 149 786 746" preserveAspectRatio="xMinYMin meet" shape-rendering="crispEdges">
                    <defs>
                        <linearGradient id="steel"><stop offset="0" stop-color="#555"/><stop offset=".5" stop-color="#b5b5b5"/><stop offset="1" stop-color="#606060"/></linearGradient>
                        <linearGradient id="bore"><stop offset="0" stop-color="#187878"/><stop offset=".35" stop-color="#268888"/><stop offset=".52" stop-color="#58aaaa"/><stop offset=".65" stop-color="#208080"/><stop offset="1" stop-color="#3a9090"/></linearGradient>
                        <linearGradient id="face" x1="0" y1="0" x2="0" y2="1"><stop offset="0" stop-color="#ececec"/><stop offset="1" stop-color="#d2d2d2"/></linearGradient>
                    </defs>

                    <!-- part body -->
                    <path d="M960 247L972 240L990 250L1105 316Q1122 330 1125 345V398L1155 415V498L932 628L700 762Q690 768 680 762L523 674L518 664L505 633L507 560L510 535Q514 526 520 523L566 498L565 487L687 416L698 421L707 415V400Q710 390 717 386L880 292Q887 289 893 293L903 299L932 285V268Q934 260 940 257Z" fill="#808080"/>
                    <path d="M880 292Q887 289 893 293L970 335L800 432L717 386Z" fill="#7b7b7b"/>
                    <path d="M513 584L560 613L677 701V761L523 674L518 664L505 633L508 580Z" fill="#585858"/>
                    <path d="M698 706L932 592V628L698 763Z" fill="#505050"/>
                    <path d="M932 533L942 513L1097 420Q1112 412 1124 430V480L1155 464V498L932 628Z" fill="#505050"/>
                    <path d="M707 405L932 533V587L707 415Z" fill="#555"/>
                    <path d="M677 701Q688 708 698 706V762Q688 768 677 761Z" fill="#666"/>
                    <path d="M679 703v59M682 704v60M685 706v59M688 706v60M691 706v59M694 706v58" stroke="#8e8e8e" stroke-width="1"/>
                    <path d="M508 590l-2 45M511 590v60M514 595l1 65M505 633l18 41M509 610l4 55" stroke="#888" stroke-width="1" fill="none"/>
                    <path d="M514 614L575 650L677 704M575 630v73M698 709L932 594M932 571L1155 444M932 533v95M938 520l-6 13" stroke="#8a8a8a" fill="none"/>
                    <path d="M707 400L932 528M707 421L932 590M843 495v15M745 440L932 548M745 428v22M868 523v28M820 480Q822 462 840 450M717 386L890 482Q930 500 945 510" stroke="#8f8f8f" fill="none" opacity=".7"/>
                    <path d="M690 425L900 578M696 424L905 580M702 420L912 582M708 419L920 584" stroke="#909090" fill="none" opacity=".7"/>
                    <path d="M921 595v38" stroke="#fff"/>

                    <!-- rail -->
                    <path d="M565 487L687 416L709 428L588 498Z" fill="#858585"/>
                    <path d="M588 498L709 428V453L588 521Z" fill="#505050"/>
                    <path d="M565 487L588 498V521L566 508Z" fill="#5e5e5e"/>
                    <path d="M566 497l22 12L709 440M648 464v22M577 492v23" stroke="#909090" fill="none"/>
                    <path d="M520 575L745 445M524 579L750 449M530 570L740 440M515 570L735 443" stroke="#949494" fill="none" opacity=".7"/>
                    <path d="M585 595L650 560M593 498L700 560M620 660L860 560M545 560L640 620M700 520L745 548M650 670L720 640" stroke="#949494" fill="none" opacity=".5"/>

                    <!-- pockets -->
                    <path d="M581 577Q578 562 598 557L630 554Q652 552 664 548Q672 540 680 525Q705 500 728 495Q760 488 788 495Q812 502 818 525Q825 545 846 565Q848 575 838 580Q825 560 810 535Q800 515 775 511Q745 508 720 520Q695 540 680 560L662 566L630 574Q600 575 587 594Q580 586 581 577Z" fill="#505050"/>
                    <path d="M587 594Q600 577 630 574L662 564L680 560Q700 532 722 520Q748 507 776 511Q802 516 812 536L840 582M584 597Q600 582 632 578L668 566L684 560Q702 537 724 524Q748 511 774 515Q798 520 808 538L832 575M668 560L690 541Q720 515 748 513Q790 512 806 540" stroke="#989898" fill="none" opacity=".8"/>
                    <path d="M613 585L656 636Q668 642 676 634L679 612Q688 603 710 605Q735 612 762 605Q790 598 800 590L802 577L814 568V592L796 615Q780 625 735 628L700 623Q684 628 675 640L673 657H658L613 605Z" fill="#4e4e4e"/>
                    <path d="M620 592v16M630 603v17M640 615v17M650 627v20M662 640v17M670 638v18M684 607v20M697 605v17M712 606v19M728 610v17M744 610v17M760 606v20M775 602v20M790 596v22M803 578v28M809 572v25" stroke="#8e8e8e"/>
                    <path d="M610 608Q608 615 625 628L655 660Q665 668 680 660L684 640Q700 628 735 632Q790 630 812 605Q820 598 818 590M616 612L658 658Q668 663 676 658L680 638Q700 626 735 630Q785 628 808 602" stroke="#989898" fill="none" opacity=".8"/>
                    <path d="M595 560v26M610 557v22M625 555v20M645 553v17M667 548v16M690 517v28M705 503v28M725 496v23M752 491v20M780 494v18M804 502v26M822 535v18M836 556v18" stroke="#858585"/>
                    <path d="M708 640q2 12 9 20v8q-9-8-9-20z" fill="#4e4e4e"/>
                    <path d="M703 648q-3 12 12 24M699 652q-2 12 12 20" stroke="#989898" fill="none"/>
                    <ellipse cx="748" cy="567" rx="28" ry="19" fill="#454545"/>
                    <path d="M724 577Q748 551 772 577Q765 585 748 585.500Q732 585 724 577Z" fill="#2f5f5f"/>
                    <path d="M725 555v20M737 550v13M748 549v14M760 550v13M770 556v18M720 567q28-20 56 0" stroke="#888" fill="none"/>
                    <path d="M723 570q25-15 51 1M730 579q18-10 38 0" stroke="#ff00ff" stroke-width="1.500" fill="none"/>
                    <path d="M748 574v11" stroke="#00cfd8" stroke-width="4"/><path d="M748 572v8" stroke="#0030ff" stroke-width="2"/>

                    <!-- front holes -->
                    <ellipse cx="550" cy="654" rx="18" ry="27" transform="rotate(-24 550 654)" fill="#4a4a4a" stroke="#999"/>
                    <ellipse cx="553" cy="651" rx="13" ry="21" transform="rotate(-24 553 651)" fill="#6a6a6a" stroke="#909090"/>
                    <ellipse cx="560" cy="646" rx="7" ry="12" transform="rotate(-24 560 646)" fill="url(#steel)"/>
                    <path d="M587 676Q590 666 602 671L640 688Q664 702 668 724Q662 734 648 729L615 710Q590 694 587 676Z" fill="#4e4e4e" stroke="#9a9a9a"/>
                    <path d="M589 672Q600 668 604 682Q622 708 666 722Q664 733 648 729L615 710Q590 694 589 672Z" fill="#7b7b7b"/>
                    <path d="M602 671l3 12M639 688v24M593 690l13-9" stroke="#9a9a9a"/>
                    <ellipse cx="1033" cy="487" rx="12" ry="18" transform="rotate(25 1033 487)" fill="url(#steel)" stroke="#999"/>
                    <ellipse cx="1134" cy="439" rx="3.500" ry="2.500" fill="#4a4a4a"/>

                    <!-- upper block details -->
                    <path d="M932 268V303L985 331L1002 296L940 260Z" fill="#666"/>
                    <path d="M936 262L1000 297M940 259L1002 294M934 268L996 300M933 275L990 302M933 282L980 305M903 300L950 328L1003 298M925 313L1003 300M930 318L998 302M955 320L1000 300" stroke="#999" fill="none"/>
                    <path d="M995 318L1010 302L1030 299L1060 304L1072 330L1063 333L1040 325L1020 328L1003 338Z" fill="#555" stroke="#8f8f8f"/>
                    <path d="M1009 302v28M1022 299v27M1030 299v25M1042 301v25M1060 304v27M998 316l62-6" stroke="#aaa"/>
                    <path d="M1006 402Q1008 394 1030 394Q1060 398 1074 420V432Q1050 415 1012 414Q1006 410 1006 402Z" fill="#4e4e4e" stroke="#888"/>
                    <path d="M1018 396v18M1033 396v19M1047 400v17M1060 408v16" stroke="#aaa"/>
                    <path d="M1095 400Q1100 350 1125 340V398L1112 412Z" fill="#3f3f3f"/>
                    <path d="M1098 400q4-40 26-50M1102 402q4-34 22-44M1106 405q4-28 18-38M1110 408q3-22 14-32" stroke="#aaa" fill="none"/>
                    <ellipse cx="948" cy="477" rx="34" ry="20" fill="#4c4c4c" stroke="#8b8b8b"/>
                    <ellipse cx="950" cy="478" rx="16" ry="12" fill="#8c8c8c"/>
                    <path d="M948 457v40M930 465l40 25M966 462l-32 30" stroke="#a5a5a5"/>
                    <g fill="#444"><ellipse cx="903" cy="332" rx="19" ry="11"/><ellipse cx="807" cy="387" rx="19" ry="11"/><ellipse cx="1023" cy="367" rx="19" ry="11"/><ellipse cx="1002" cy="444" rx="19" ry="11"/><ellipse cx="875" cy="448" rx="19" ry="11"/></g>

                    <!-- measured plane -->
                    <path d="M983 255L1176 367L952 497L758 385Z" fill="#2aa3a3" fill-opacity=".6"/>
                    <ellipse cx="921" cy="398" rx="71" ry="41" fill="url(#bore)"/>
                    <path d="M850 392Q855 357 921 356Q987 358 992 392Q980 365 921 364Q862 366 853 400Z" fill="#4d9999"/>
                    <ellipse cx="881" cy="398" rx="14" ry="20" fill="#358f8f" stroke="#5aa5a5"/>
                    <path d="M870 393l22 14" stroke="#70b5b5" stroke-width="4"/>
                    <path d="M921 358v80M950 362l8 60M866 405Q921 375 976 408" stroke="#86c2c2" fill="none" opacity=".7"/>
                    <path d="M853 402Q852 364 921 362Q990 364 988 402Q986 416 977 424M853 402Q856 414 866 424M866 422Q870 392 921 391Q972 392 977 422M884 432Q900 420 921 420Q944 420 958 432M905 437h33" fill="none" stroke="#9a3ee8" stroke-width="1.800"/>
                    <ellipse cx="948" cy="405" rx="9" ry="11" fill="#0a8ae0"/>
                    <ellipse cx="936" cy="313" rx="7" ry="3" transform="rotate(-15 936 313)" fill="#0050ff"/>
                    <ellipse cx="957" cy="315" rx="12" ry="5" transform="rotate(-15 957 315)" fill="#388f8f" stroke="#80baba"/>
                    <path d="M921 387v50" stroke="#00d0e8" stroke-width="2"/><path d="M921 388v24" stroke="#00b8e8" stroke-width="3" stroke-dasharray="4 2"/>
                    <ellipse cx="922" cy="398" rx="115" ry="67" fill="none" stroke="#e400f4" stroke-width="1.800"/>
                    <path d="M1023 365Q1040 395 1035 415Q1025 440 1002 450M807 385v22" fill="none" stroke="#9a3ee8" stroke-width="2"/>
                    <path d="M983 255L1176 367L952 497L758 385ZM872 319L1065 432M1080 311L856 441M903 334L812 385M758 385v-12M810 386l20-19 2 8 5 3-22 10M810 386l20-4 7-3M830 367v15" fill="none" stroke="#ff8ef8" stroke-width="2"/>
                    <g fill="none" stroke-width="1.500"><g stroke="#ff8ef8"><ellipse cx="903" cy="332" rx="19" ry="11"/><ellipse cx="807" cy="387" rx="19" ry="11"/></g><g stroke="#ff00ff"><ellipse cx="1023" cy="367" rx="19" ry="11"/><ellipse cx="1002" cy="444" rx="19" ry="11"/><ellipse cx="875" cy="448" rx="19" ry="11"/></g></g>

                    <path d="M578 476q6-8 12-6l2 8-10 2z" fill="#0000ee"/>
                    <path d="M1063 368L1075 363L1089 370L1094 388L1113 414L1098 411L1080 394Z" fill="#00f4c0"/>
                    <path d="M790 663h16v14l-2 12h-12l-3-12z" fill="#60f000"/>
                    <g id="dots"></g>

                    <!-- scan tracks -->
                    <path d="M590 481L607 488V512L655 544V571M680 565L735 609V631M763 630L780 640L797 655V704M655 571l14-1" fill="none" stroke="#f00000" stroke-width="1.500"/>
                    <path d="M735 609V631" stroke="#f00000" stroke-width="2"/>

                    <!-- hole on left top corner -->
                    <ellipse cx="539" cy="540" rx="14" ry="8" fill="#444" stroke="#ff00ff" stroke-width="2"/>
                    <g id="stars"></g>

                    <!-- origin marker -->
                    <path d="M961 233l11-6 11 6v12l-11 6-11-6z" fill="#ddd"/>
                    <path d="M961 246v-13l11-6" fill="none" stroke="#00e000" stroke-width="2.500"/>
                    <path d="M972 227l11 6v12" fill="none" stroke="#f00000" stroke-width="2.500"/>
                    <path d="M983 245l-11 6-11-6M972 237v-20" fill="none" stroke="#0000e0" stroke-width="2.500"/>
                    <path d="M969 219l3-4 3 4-2 5h-2z" fill="#0000e0"/><path d="M951 252l8-5 1 4-6 1zM972 240l-14 9" fill="#f00000" stroke="#f00000"/><path d="M972 240l14 9M984 246l9 6-6-1z" fill="#00e000" stroke="#00e000"/>

                    <!-- axis triad -->
                    <g fill="none" shape-rendering="auto">
                        <path d="M498.500 822V784M498.500 768L491 783l7.500 4 7-4zM491 783l7.500-4 7 4M498.500 768v19" stroke="#0000ff" stroke-width="1.500"/>
                        <path d="M498 821L452 846M452 846l11-13 7 11zM463 833l-1 13M452 846h17M463 833l6 3v9M457 840l12 0" stroke="#ff0000" stroke-width="1.500"/>
                        <path d="M498 821L544 846M544 846l-10-13-7 13zM534 833l-7 5v8h17M527 838l17 8" stroke="#00e800" stroke-width="1.500"/>
                    </g>
                    <g font-family="Lato, sans-serif" font-weight="300">
                        <text x="502" y="763" font-size="24" fill="#0000ff">Z</text>
                        <text x="549" y="843" font-size="23" fill="#00e800">Y</text>
                        <text x="456" y="842" font-size="22" fill="#ff0000">X</text>
                    </g>
                    <ellipse cx="1123" cy="862.500" rx="4" ry="6" fill="#808080"/>
                    <text x="1109" y="869" font-family="Open Sans, sans-serif" font-size="17" fill="#00007a">50</text>

                    <!-- view cube -->
                    <g shape-rendering="auto">
                        <path d="M1114 228l29 19 28-19v6q-14 12-28 17-16-5-29-17z" fill="#aaa"/>
                        <path d="M1110 192l32-15 33 15-32 18z" fill="#ebebeb"/>
                        <path d="M1110 192l33 18v37l-30-19z" fill="url(#face)"/>
                        <path d="M1175 192l-32 18v37l29-19z" fill="url(#face)"/>
                        <path d="M1110 192l32-15 33 15-32 18zM1143 210v37M1110 192l3 36 30 19 29-19 3-36" fill="none" stroke="#777" stroke-dasharray="3 1"/>
                        <path d="M1137 207l6-4 6 4v6l-6 3-6-3z" fill="#d0d4da"/>
                        <path d="M1130 197l25-10" stroke="#aaa" stroke-width="4" stroke-dasharray="4 1 2 2 3 1"/>
                        <path d="M1114 211l26 17" stroke="#a5a5a5" stroke-width="5" stroke-dasharray="3 1 2 1 4 1"/>
                        <path d="M1147 226l22-12" stroke="#aaa" stroke-width="5" stroke-dasharray="4 1 2 2 3 1"/>
                    </g>
                </svg>
                <span class="absolute right-[102px] top-[25px] flex w-[22px] h-[22px] items-center justify-center rounded-full border-2 border-[#dd1018] bg-white font-['Liberation_Sans',sans-serif] text-[15px] text-black shadow">8</span>
            </div>
            <!-- sheet tabs -->
            <div class="flex h-[19px] shrink-0 items-start pl-[3px] text-[13px] leading-4 text-black">
                <button class="mt-[2px] flex w-4 h-[15px] items-center justify-center border-b border-r border-[#999] bg-[#f0f0f0]" aria-label="이전 시트"><svg class="w-[5px] h-2" viewBox="0 0 5 8"><path d="M5 0v8L0 4z" fill="#444"/></svg></button>
                <button class="ml-[2px] mr-px mt-[2px] flex w-4 h-[15px] items-center justify-center border-b border-r border-[#999] bg-[#f0f0f0]" aria-label="다음 시트"><svg class="w-[5px] h-2" viewBox="0 0 5 8"><path d="M0 0v8l5-4z" fill="#444"/></svg></button>
                <svg class="w-[9px] h-[17px]" viewBox="0 0 9 17"><path d="M0 .5l7 15h2" fill="none" stroke="#000" stroke-width="1.500"/></svg>
                <button class="px-px font-bold">CAD 뷰</button>
                <svg class="w-[13px] h-[17px]" viewBox="0 0 13 17"><path d="M8 1h5v15H9z" fill="#f0f0f0"/><path d="M1 16L8 .5h5M5 8l4 8h4" fill="none" stroke="#000" stroke-width="1.300"/></svg>
                <button class="h-[17px] border-y border-black bg-[#f0f0f0] pl-px leading-[13px]">정보</button>
                <svg class="w-[14px] h-[17px]" viewBox="0 0 14 17"><path d="M0 1h14v15H0z" fill="#f0f0f0"/><path d="M0 .5h14M0 16h2L9 .5M6 8l4 8h4" fill="none" stroke="#000" stroke-width="1.300"/></svg>
                <button class="h-[17px] border-y border-black bg-[#f0f0f0] leading-[13px]">보고서</button>
                <svg class="w-[14px] h-[17px]" viewBox="0 0 14 17"><path d="M0 1h14v15H0z" fill="#f0f0f0"/><path d="M0 .5h14M0 16h2L9 .5M6 8l4 8h4" fill="none" stroke="#000" stroke-width="1.300"/></svg>
                <button class="h-[17px] border-y border-black bg-[#f0f0f0] leading-[13px]">다이나믹 포인트</button>
                <svg class="w-[14px] h-[17px]" viewBox="0 0 14 17"><path d="M0 1h14v15H0z" fill="#f0f0f0"/><path d="M0 .5h14M0 16h2L9 .5M6 8l4 8h4" fill="none" stroke="#000" stroke-width="1.300"/></svg>
                <button class="h-[17px] border-y border-black bg-[#f0f0f0] leading-[13px]">단면도</button>
                <svg class="w-3 h-[17px]" viewBox="0 0 12 17"><path d="M0 1h10L4 16H0z" fill="#f0f0f0"/><path d="M0 .5h12M0 16h4L10 .5" fill="none" stroke="#000" stroke-width="1.300"/></svg>
                <div class="h-px w-[6px] bg-black"></div>
                <span class="z-10 -mt-[7px] flex w-[22px] h-[22px] shrink-0 items-center justify-center rounded-full border-2 border-[#dd1018] bg-white font-['Liberation_Sans',sans-serif] text-[15px] text-black shadow">7</span>
                <div class="mr-[2px] h-px flex-1 bg-black"></div>
            </div>
        </section>

        <!-- view toolbar -->
        <aside class="ml-[6px] mr-[2px] flex w-12 shrink-0 flex-col items-center bg-[#fafafa]">
            <div class="flex h-[34px] w-full items-center justify-end bg-[#f0f0f0] pr-[6px]"><svg class="w-[9px] h-[5px] text-[#666]" viewBox="0 0 5 3"><use href="#arrow"/></svg></div>
            <div class="flex flex-col gap-[9px] pr-2 pt-[5px]">
                <button class="w-8 h-8" aria-label="위에서 보기"><svg viewBox="0 0 32 32"><path d="M8.500 1v22.500h22M.5 31l8-8" fill="none" stroke="#999"/><path d="M.5 9h23v22.500H.5zM23.500 31.500l8-8V1M23.500 9" fill="none" stroke="#555" stroke-width="1.200"/><path d="M.5 9L8 .5h23.500L23.500 9z" fill="#6ab4ee" stroke="#555"/><path d="M31 26v6h-6z" fill="#000"/></svg></button>
                <button class="w-8 h-8" aria-label="등각 보기"><svg viewBox="0 0 32 32"><path d="M15.500.5L29.500 8v15l-14 8-14-8V8z" fill="#f4f4f4" stroke="#555" stroke-width="1.200"/><path d="M7 12h18l-9.500 8z" fill="#6ab4ee"/><path d="M1.500 8l14 12v11M15.500 20l14-12" fill="none" stroke="#555" stroke-width="1.200"/><path d="M31 26v6h-6z" fill="#000"/></svg></button>
                <button class="w-8 h-8" aria-label="전체 보기"><svg viewBox="0 0 32 32"><path d="M2 2l7 7M30 2l-7 7M2 30l7-7M30 30l-7-7" stroke="#555" stroke-width="1.200"/><path d="M0 0h5L0 5zM32 0h-5l5 5zM0 32h5l-5-5zM32 32h-5l5-5z" fill="#555"/><rect x="11.500" y="11.500" width="9" height="9" fill="#fff" stroke="#1a8ae0" stroke-width="1.200"/></svg></button>
                <button class="w-8 h-8" aria-label="음영 와이어"><svg viewBox="0 0 32 32"><path d="M.5 9L8 .5h23L23 9z" fill="#b4ddf8"/><path d="M.5 9H23v22H.5z" fill="#68b2ea"/><path d="M.5 31V9H23z" fill="#8ccbf8"/><path d="M23 9l8-8.500V23l-8 8z" fill="#3d93d6"/><path d="M.5 9L8 .5h23L23 9H.5v22H23V9M12 9v22M.5 20H23l8-9M12 9l8-8.500M4 5h23v22M31 .5V23l-8 8" fill="none" stroke="#4a4a4a" stroke-width="1.200"/></svg></button>
                <button class="w-8 h-8" aria-label="와이어프레임"><svg viewBox="0 0 32 32"><path d="M8.500.5h23v23h-23zM.5 8.500h23v23H.5zM.5 8.500l8-8M23.500 8.500l8-8M.5 31.500l8-8M23.500 31.500l8-8" fill="none" stroke="#555" stroke-width="1.200"/></svg></button>
                <button class="w-8 h-8" aria-label="음영"><svg viewBox="0 0 32 32"><path d="M.5 9L8 .5h23.500L23 9z" fill="#8ccbf8"/><path d="M.5 9H23v22.500H.5z" fill="#68b2ea"/><path d="M23 9l8.500-8.500V23L23 31.500z" fill="#4095d6"/><path d="M7 12h16v11H7z" fill="#86c4f2"/><path d="M.5 31.500L7 23" stroke="#4095d6"/><path d="M.5 9L8 .5h23.500V23L23 31.500H.5z" fill="none" stroke="#3a8acb"/></svg></button>
                <button class="w-8 h-8" aria-label="단면"><svg viewBox="0 0 32 32"><path d="M11 31H.5V9L8 .5h8" fill="none" stroke="#555" stroke-width="1.200" stroke-dasharray="5 3"/><path d="M12.500 31V8l7-7.500" fill="none" stroke="#1a8ae0" stroke-width="1.500"/><path d="M15 9h9v22h-9z" fill="#68b2ea"/><path d="M15 9l7-8.500h9.500L24 9z" fill="#8ccbf8"/><path d="M24 9l7.500-8.500V23L24 31z" fill="#3d93d6"/></svg></button>
            </div>
            <span class="mr-2 mt-1 flex w-[22px] h-[22px] items-center justify-center rounded-full border-2 border-[#dd1018] bg-white font-['Liberation_Sans',sans-serif] text-[15px] text-black shadow">9</span>
        </aside>
    </main>

    <!-- status bar -->
    <footer class="flex h-[22px] shrink-0 items-center bg-[#666] pr-1 font-['Lato','Noto_Sans_CJK_KR',sans-serif] text-xs leading-4 text-white whitespace-nowrap">
        <span class="ml-auto flex w-[22px] h-[22px] items-center justify-center rounded-full border-2 border-[#dd1018] bg-white font-['Liberation_Sans',sans-serif] text-[15px] text-black">10</span>
        <span class="ml-1">Geometric PLP Alignment 1</span>
        <span class="ml-[6px]">Master part</span>
        <span class="ml-[6px]">유효하지않음;프로브데이타베이스 없음</span>
        <span class="ml-[6px] w-16">PCS</span>
        <span class="w-[57px]">20.484</span>
        <span class="w-[57px]">124.747</span>
        <span class="w-[55px]">12.273</span>
        <span class="bg-[#ff0000] px-[2px]">연결되지 않음</span>
        <svg class="mb-1 ml-3 w-[10px] h-[10px] self-end" viewBox="0 0 10 10"><path d="M7 0h2v2H7zM4 3.500h2v2H4zM7 3.500h2v2H7zM1 7h2v2H1zM4 7h2v2H4zM7 7h2v2H7z" fill="#c8c8c8"/></svg>
    </footer>

    <script>
        const ns = 'http://www.w3.org/2000/svg';
        const dots = document.getElementById('dots');
        const stars = document.getElementById('stars');

        function addDot(x, y, fill, rx = 11, ry = 7, turn = 10) {
            const dot = document.createElementNS(ns, 'ellipse');
            dot.setAttribute('cx', x);
            dot.setAttribute('cy', y);
            dot.setAttribute('rx', rx);
            dot.setAttribute('ry', ry);
            dot.setAttribute('transform', `rotate(${turn} ${x} ${y})`);
            dot.setAttribute('fill', fill);
            dots.appendChild(dot);
        }

        // measured points: x, y, colour
        const points = [
            [683, 428, '#c8ff00'], [718, 431, '#60ff00'], [744, 452, '#40ff00'], [760, 464, '#00ff40'],
            [656, 447, '#ff8000'], [622, 464, '#ff6000'], [692, 481, '#90ff00'], [652, 517, '#ff2000'], [653, 514, '#ff7000'],
            [593, 541, '#ff3800'], [548, 525, '#ff1800'], [562, 547, '#ff1400'], [569, 558, '#ff1000'],
            [525, 571, '#ff0400'], [537, 586, '#ff0000'], [566, 604, '#ff0000', 12, 9], [597, 631, '#ff0000'],
            [646, 588, '#ff0800'], [659, 623, '#ff0000', 11, 8, 20], [731, 640, '#ff0000'], [751, 664, '#ff0000'],
            [689, 692, '#ff0000'], [800, 640, '#ff0800'], [823, 630, '#ff2800'], [836, 623, '#ff3800', 11, 8, 15],
            [892, 593, '#ff6000', 11, 8, 15], [868, 600, '#ff8000', 11, 8, 20], [884, 578, '#90ff00'], [861, 552, '#30ff00'],
            [829, 525, '#00ff30', 12, 8], [812, 508, '#00ff38', 11, 8], [737, 528, '#c8ff00'], [773, 539, '#90ff00'],
            [759, 534, '#ffff00'], [798, 566, '#ff8000'], [778, 584, '#ff6800'], [748, 592, '#ff5800'],
            [762, 391, '#48f800'], [1130, 422, '#0000ff']
        ];
        // scanned bands
        const bands = [
            [1108, 325, '#0060ff', 11, 8], [1097, 330, '#0068ff', 7, 7], [1102, 342, '#0070f8', 10, 10], [1084, 343, '#0070ff', 6, 7],
            [1088, 349, '#0080f8', 8, 9], [1092, 360, '#0088f0', 12, 11], [1073, 355, '#0070ff', 6, 6], [1078, 361, '#0080f0', 8, 6],
            [1093, 374, '#0090f0', 6, 12], [1061, 371, '#30f020', 10, 6], [1068, 381, '#20e840', 11, 7], [1077, 371, '#00f0d0', 8, 7],
            [1084, 381, '#00f8e0', 7, 12, -20], [1085, 392, '#00ffb0', 8, 11, -30], [1098, 402, '#00ff90', 10, 6, 50],
            [1087, 408, '#40ff00'], [1086, 422, '#48f800', 11, 6],
            [589, 481, '#ff2400', 10, 8], [597, 482, '#ff2a00', 12, 9, 20], [604, 485, '#ff3000', 8, 8], [608, 496, '#ff5000', 7, 10], [605, 504, '#ff5a10', 7, 10],
            [610, 517, '#ff6410', 8, 6], [619, 518, '#ff5a00', 10, 8], [625, 522, '#ff6010', 12, 8, 30], [633, 529, '#ff5208', 12, 8, 35],
            [641, 534, '#ff5810', 12, 7, 35], [650, 541, '#ff5008', 9, 8], [656, 545, '#ff5810', 10, 8], [656, 556, '#ff4c10', 8, 12], [655, 565, '#ff4c10', 7, 8],
            [680, 573, '#ff5208', 9, 9], [686, 574, '#ff5008', 12, 9, 25], [695, 581, '#ff5808', 11, 10, 35], [705, 587, '#ff4c08', 13, 9, 30], [714, 594, '#ff5008', 12, 7, 25],
            [771, 639, '#ff2000', 12, 9], [778, 643, '#ff1800', 10, 8], [787, 650, '#ff0800', 10, 7], [797, 656, '#ff0000', 10, 7],
            [795, 679, '#a8f000', 6, 9, 0], [800, 682, '#b8f000', 5, 10, 0], [794, 697, '#ff7010', 6, 9, 0], [799, 695, '#ff5a10', 7, 9, 0], [797, 701, '#ff6a10', 7, 6, 0]
        ];
        points.forEach(p => addDot(...p));
        bands.forEach(p => addDot(...p));

        // hole centres with their little axes
        [[903, 332], [807, 387], [1023, 367], [1002, 444], [875, 449], [921, 398], [539, 540]].forEach(([x, y]) => {
            [[`M${x} ${y}v-12`, '#0000d0'], [`M${x + 5} ${y}h14`, '#e00000'],
             [`M${x - 5} ${y}h10M${x} ${y - 5}v10M${x - 4} ${y - 4}l8 8M${x + 4} ${y - 4}l-8 8`, '#ffffff']].forEach(([d, stroke]) => {
                const path = document.createElementNS(ns, 'path');
                path.setAttribute('d', d);
                path.setAttribute('stroke', stroke);
                stars.appendChild(path);
            });
        });
    </script>
</body>
</html>
